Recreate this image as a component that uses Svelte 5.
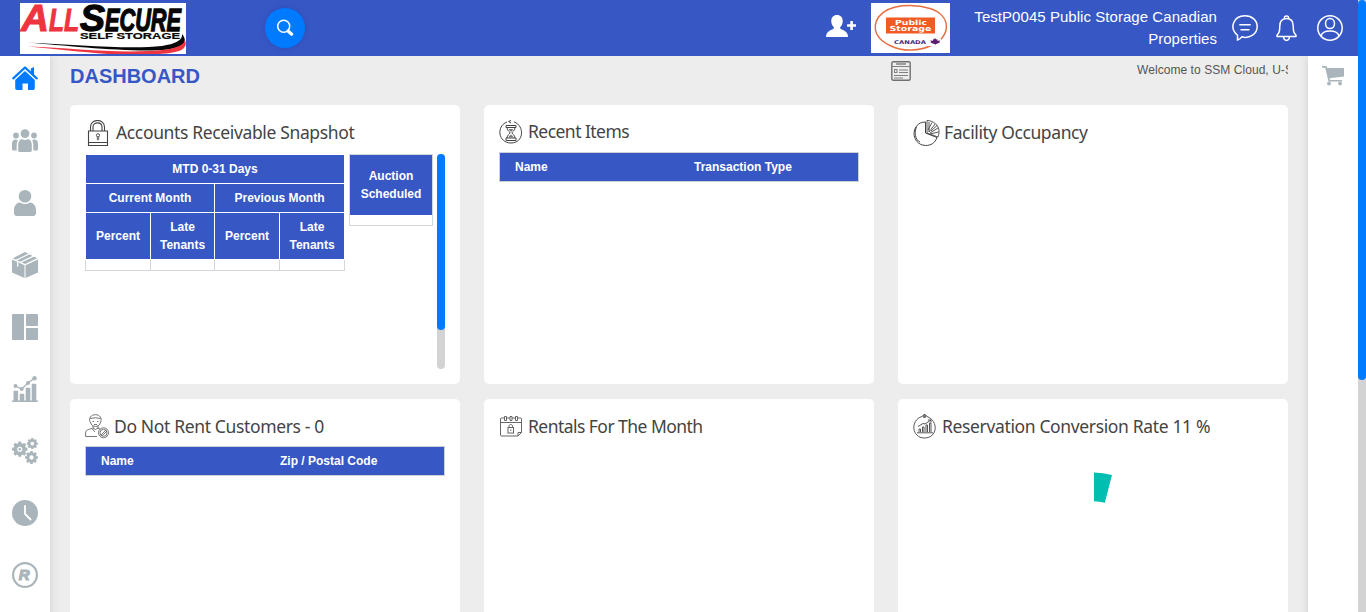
<script>
  const nav = ['home', 'group', 'user', 'box', 'layout', 'chart', 'gears', 'clock', 'registered'];
  const cards = [
    { icon: 'lock', title: 'Accounts Receivable Snapshot', kind: 'snapshot' },
    { icon: 'hourglass', title: 'Recent Items', kind: 'table', cols: ['Name', 'Transaction Type'] },
    { icon: 'pie', title: 'Facility Occupancy', kind: 'empty' },
    { icon: 'blocked', title: 'Do Not Rent Customers - 0', kind: 'table', cols: ['Name', 'Zip / Postal Code'] },
    { icon: 'calendar', title: 'Rentals For The Month', kind: 'empty' },
    { icon: 'growth', title: 'Reservation Conversion Rate 11 %', kind: 'gauge' }
  ];
  const gear = (cx, cy, r) => {
    const pts = [];
    for (let i = 0; i < 8; i++) {
      for (const [d, k] of [[-0.26, 0.8], [-0.19, 1], [0.19, 1], [0.26, 0.8]]) {
        const a = (i * Math.PI) / 4 + d;
        pts.push(`${(cx + Math.cos(a) * r * k).toFixed(2)} ${(cy + Math.sin(a) * r * k).toFixed(2)}`);
      }
    }
    const h = r * 0.33;
    return `M${pts.join('L')}Z M${cx - h} ${cy}a${h} ${h} 0 1 0 ${2 * h} 0a${h} ${h} 0 1 0 ${-2 * h} 0Z`;
  };
</script>

<div class="app">
  <header>
    <svg class="brand" width="166" height="51" viewBox="0 0 166 51">
      <rect width="166" height="51" fill="#fff" />
      <g font-family="Liberation Sans" font-weight="bold" font-style="italic">
        <g fill="#ee343f" stroke="#ee343f" stroke-width="1">
          <text x="1" y="27.500" font-size="37" textLength="28" lengthAdjust="spacingAndGlyphs">A</text>
          <text x="29" y="27.500" font-size="31" textLength="30" lengthAdjust="spacingAndGlyphs">LL</text>
        </g>
        <g fill="#050505" stroke="#050505" stroke-width="1.300">
          <text x="60" y="27.500" font-size="37" textLength="25" lengthAdjust="spacingAndGlyphs">S</text>
          <text x="85" y="27.500" font-size="31" textLength="76" lengthAdjust="spacingAndGlyphs">ECURE</text>
        </g>
      </g>
      <text x="60" y="35.500" font-family="Liberation Sans" font-weight="bold" font-size="9" fill="#080808" stroke="#080808" stroke-width=".2" textLength="100" lengthAdjust="spacingAndGlyphs">SELF STORAGE</text>
      <path d="M7 39.500C55 42 112 46.500 142 43C156 41 163 37 162 31C168 38 165 44 148 46.500C115 50 50 43 7 39.500Z" fill="#080808" />
      <path d="M8 43.500C50 45 90 50 129 48C151 47 163 44 165 37C168 45 162 50 139 51H88C60 49 37 46 8 43.500Z" fill="#ee343f" />
    </svg>
    <button class="search" aria-label="Search">
      <svg width="18" height="18" viewBox="0 0 18 18" fill="none" stroke="#fff"><circle cx="7.700" cy="7.300" r="6" stroke-width="1.500" /><path d="M12 12l3.700 3.200" stroke-width="3.200" stroke-linecap="round" /></svg>
    </button>
    <div class="tools">
      <svg class="adduser" width="31" height="23" viewBox="0 0 31 23" fill="#fff"><path d="M11 0C7.500 0 5 2.500 5.300 6.500C5.500 9.400 6.500 11 8 12.500C8 15.500 0 14.500 0 22H22C22 14.500 14 15.500 14 12.500C15.500 11 16.500 9.400 16.700 6.500C17 2.500 14.500 0 11 0ZM24.300 6h2.600v3.200H30v2.600h-3.100V15h-2.600v-3.200h-3.200V9.200h3.200Z" /></svg>
      <svg class="partner" width="79" height="50" viewBox="0 0 79 50">
        <rect width="79" height="50" fill="#fff" />
        <path d="M60 42.500C81 33 80 13 60 5.800C42 0 18 1 7.500 14C0 26 6 37 20 43C32 49 49 48 60 42.500" fill="none" stroke="#e56f43" stroke-width="1.500" />
        <path d="M15 14.500H64V30.500H15Z" fill="#f15a22" />
        <g font-family="DejaVu Sans" font-weight="bold" font-size="7" fill="#fff">
          <text x="24" y="21.500" textLength="32" lengthAdjust="spacingAndGlyphs">Public</text>
          <text x="18.500" y="28" textLength="42" lengthAdjust="spacingAndGlyphs">Storage</text>
        </g>
        <rect x="22" y="35.500" width="48" height="7.500" fill="#fff" />
        <text x="23" y="41" font-family="DejaVu Sans" font-weight="bold" font-size="5" fill="#4a287e" textLength="32" lengthAdjust="spacingAndGlyphs">CANADA</text>
        <path d="M64 35l1.200 1.500 1.300-.3-.2 1.600 3-.4-1 1.300.8.600-3 1.500-1.500.2-.3 1.400-.6-1.400-1.400-.2-3-1.500.8-.6-1-1.300 3 .4-.2-1.600 1.200.3Z" fill="#5b1c70" />
      </svg>
      <div class="account">TestP0045 Public Storage Canadian Properties</div>
      <svg class="chat" width="26" height="26" viewBox="0 0 26 26" fill="none" stroke="#fff" stroke-width="1.500"><path d="M5.500 20.300C-3.200 13 1.500.8 13 .8C20 .8 25.200 5.500 25.200 11.500C25.200 19.500 17 24 9.800 21.800C8.500 23.700 7.500 24.300 5.500 25Z" /><path d="M7.300 9.800h11.400M8.500 14.800h9" /></svg>
      <svg class="bell" width="21" height="27" viewBox="0 0 21 27" fill="none" stroke="#fff" stroke-width="1.500" stroke-linejoin="round"><path d="M8.500 3.500C7.500 0 13.500 0 12.500 3.500M10.500 3.500C5.500 3.500 3.800 7 3.800 11C3.800 17 3 18 1 20.200V21.500H20V20.200C18 18 17.200 17 17.200 11C17.200 7 15.500 3.500 10.500 3.500ZM7.500 22C8 26.500 13 26.500 13.500 22" /></svg>
      <svg width="26" height="26" viewBox="0 0 26 26" fill="none" stroke="#fff" stroke-width="1.500"><circle cx="13" cy="13" r="12.200" /><ellipse cx="13" cy="8.600" rx="4.500" ry="5" /><path d="M4 21C5 17 8.500 16 13 16S21 17 22 21" /></svg>
    </div>
  </header>

  <div class="body">
    <nav>
      {#each nav as name}
        <svg class:active={name === 'home'} width="26" height="26" viewBox="0 0 26 26" fill="currentColor">
          {#if name === 'home'}
            <path d="M13 4.900L22.800 13.800V22.300Q22.800 24 21.300 24H16V17.500H10.500V24H5Q3.200 24 3.200 22.300V13.800Z" />
            <path d="M1.300 12.300L13 1.300L24.700 12.300" fill="none" stroke="#fff" stroke-width="4.400" />
            <path d="M1.300 12.300L13 1.500L24.700 12.300" fill="none" stroke="currentColor" stroke-width="2.300" stroke-linecap="round" stroke-linejoin="round" /><path d="M18.800 2.500L22 1V10L18.800 7Z" />
          {:else if name === 'group'}
            <circle cx="13" cy="5.700" r="4.400" /><circle cx="4" cy="7.500" r="2.900" /><circle cx="22" cy="7.500" r="2.900" />
            <path d="M6.200 22.500V17C6.200 13 8.500 11.300 10 11.300Q13 12.800 16 11.300C17.500 11.300 19.800 13 19.800 17V22.500Q19.800 24 18 24H8Q6.200 24 6.200 22.500ZM0 21V16C0 13 1.500 11.500 3 11.500L6 12C5 14 4.700 15 4.700 17V22.500H1.500Q0 22.500 0 21ZM26 21V16C26 13 24.500 11.500 23 11.500L20 12C21 14 21.300 15 21.300 17V22.500H24.500Q26 22.500 26 21Z" />
          {:else if name === 'user'}
            <circle cx="13" cy="6.300" r="6.300" /><path d="M2 23V20C2 15 5.500 12.500 8 12.500Q13 15.500 18 12.500C20.500 12.500 24 15 24 20V23Q24 26 21 26H5Q2 26 2 23Z" />
          {:else if name === 'box'}
            <path d="M0 7.600L12.500 13.200V26L0 20.500ZM26 7.600V20.500L13.500 26V13.200ZM.8 6.300L13 0L25.200 6.300L13 12Z" />
            <path d="M4 8.300L17.500 1.800M8.500 10.300L22 3.900M5.700 9.200V14.700" fill="none" stroke="#fff" stroke-width="1.200" />
          {:else if name === 'layout'}
            <path d="M1 0H12V26H1Q0 26 0 25V1Q0 0 1 0ZM14 0H25Q26 0 26 1V12H14ZM14 14H26V25Q26 26 25 26H14Z" />
          {:else if name === 'chart'}
            <path d="M0 24.600H26V26H0ZM1.500 15.500q0-.7.7-.7h3.200q.7 0 .7.700V25H1.500ZM7.700 18.500q0-.7.7-.7h3.200q.7 0 .7.700V25H7.700ZM13.700 12.500q0-.7.7-.7h3.200q.7 0 .7.700V25h-4.600ZM19.700 8.500q0-.7.7-.7h3.200q.7 0 .7.700V25h-4.600Z" /><path d="M3.500 10L9.700 13L16 7L22.500 2.300" fill="none" stroke="currentColor" stroke-width="1.300" /><circle cx="3.500" cy="10" r="2" /><circle cx="9.700" cy="13" r="2" /><circle cx="16" cy="7" r="2" /><circle cx="22.500" cy="2.300" r="2.200" />
          {:else if name === 'gears'}
            <path fill-rule="evenodd" d={gear(7.8, 11.2, 7.8)} /><path fill-rule="evenodd" d={gear(20.3, 5.6, 5.6)} /><path fill-rule="evenodd" d={gear(19.5, 19.5, 6.5)} />
            <circle cx="7.800" cy="11.200" r="1.300" />
          {:else if name === 'clock'}
            <circle cx="13" cy="13" r="13" /><path d="M13 6V14L18.500 19.500" fill="none" stroke="#fff" stroke-width="1.800" stroke-linecap="round" />
          {:else}
            <circle cx="13" cy="13" r="11.900" fill="none" stroke="currentColor" stroke-width="2.200" />
            <text x="6.700" y="18.400" font-family="Liberation Sans" font-weight="bold" font-style="italic" font-size="15" stroke="currentColor" stroke-width="1.200">R</text>
          {/if}
        </svg>
      {/each}
    </nav>

    <main>
      <div class="top">
        <h1>DASHBOARD</h1>
        <svg class="news" width="20" height="20" viewBox="0 0 20 20" fill="none" stroke="#808080"><rect x=".8" y=".8" width="18.400" height="18.400" rx="1.500" stroke="#707070" stroke-width="1.400" /><path d="M1 5.500H19M8 9H17M8 11.500H17M3 14.500H17M3 17H12" stroke-width="1" /><path d="M5 3H15" stroke-width="1.500" /><rect x="3.500" y="8.500" width="2.500" height="3" /></svg>
        <div class="ticker">Welcome to SSM Cloud, U-Store</div>
      </div>
      <div class="cards">
        {#each cards as card}
          <section class="card {card.icon}">
            <h2>
              {#if card.icon === 'lock'}
                <svg width="26" height="26" viewBox="0 0 26 26" fill="none" stroke="#444" stroke-width="1.100"><path d="M5.500 11V7C5.500-1.700 19.500-1.700 19.500 7V11M8 11V7C8 1.500 17 1.500 17 7V11M3.500 11H22.500V25.500H3.500ZM3.500 22.500H22.500" /><circle cx="13" cy="15.300" r="1.600" stroke-width=".9" /><path d="M12.300 16.800V19.700H13.700V16.800" stroke-width=".8" /></svg>
              {:else if card.icon === 'hourglass'}
                <svg width="24" height="24" viewBox="0 0 24 24" fill="none" stroke="#444"><path d="M8 2C-3 6-1 23 12 23S26 6 15 1.800M12 .5L9.500 1.500L12 3" stroke-width="1" /><path d="M7 5.500H17V7.500H7ZM7 18H17V20.500H7ZM8 7.500C8 11 11 11.500 11 12.800S8 15 8 18M16 7.500C16 11 13 11.500 13 12.800S16 15 16 18" stroke-width="1" /><path d="M9.500 9H14.500L12 12ZM12 14.500L15 17.500H9Z" fill="#777" stroke="none" /></svg>
              {:else if card.icon === 'pie'}
                <svg width="27" height="26" viewBox="0 0 27 26" fill="none" stroke="#444"><path d="M12.500 2C-2.500 2-3 24.500 12.500 25.500C18 25.500 22 23 24 17.500L12.500 13ZM3.500 7C1 12 2 20 7 22" /><path d="M14 .5C20 .5 26 5 26 11C26 14 25.500 15.500 25 17L14 13ZM16 2V12L22 4M17 13L25 8M17 14L25.500 12M18 11L24 5.500M15 10L19 2.500" stroke-width=".9" /></svg>
              {:else if card.icon === 'blocked'}
                <svg width="24" height="25" viewBox="0 0 24 25" fill="none" stroke="#666" stroke-width=".9"><path d="M5 8C3.500 4 6 .7 10.500.7S17 4 15.700 8M5.200 4.500Q10.500 3 15.500 4.500M5.500 8C6 14 15 14 15.500 8M8 11.500V15M13 11.500V15M8 14Q10.500 17 13 14M12 22.500H.6V19C.6 16 3 15.500 7 14.500L10 18M13 14L15 15M7.500 7.500H9M12 7.500H13.500M9 10.500H12" /><circle cx="18.500" cy="18.800" r="5" /><circle cx="18.500" cy="18.800" r="3.500" /><path d="M16 21L21 16M17 22L22 17" /></svg>
              {:else if card.icon === 'calendar'}
                <svg width="24" height="24" viewBox="0 0 24 24" fill="none" stroke="#666"><path d="M1.500 5Q1.500 4 2.500 4H21.500Q22.500 4 22.500 5V18.500L19 22H2.500Q1.500 22 1.500 21ZM1.500 8.500H22.500M19 22V18.500H22.500" /><path d="M5.500 2.500h2v4h-2ZM11 2.500h2v4h-2ZM16.500 2.500h2v4h-2Z" fill="#fff" /><rect x="9" y="13.500" width="5.500" height="5.500" /><path d="M10 13.500V12C10 10 13.500 10 13.500 12V13.500M11.800 15.500v1.500" /></svg>
              {:else}
                <svg width="24" height="25" viewBox="0 0 24 25" fill="none" stroke="#555"><path d="M9 2.500C-3 6-1.500 24 11.500 24S26 7 14 2.500" /><path d="M11.500 0L13.500 2L11.500 4L9.500 2Z" fill="#777" /><path d="M5 12.500L10 9.500L12 10L18 6M15 6H18V8.500M4 18.800H20M6 18v-3h1.500v3M9.500 18v-5H11v5M13 18v-7h1.500v7M16.500 18V9H18v9" /></svg>
              {/if}
              <span>{card.title}</span>
            </h2>
            {#if card.kind === 'snapshot'}
              <div class="snapshot">
                <div class="aging">
                  <b class="all">MTD 0-31 Days</b>
                  <b class="half">Current Month</b><b class="half">Previous Month</b>
                  <b>Percent</b><b>Late Tenants</b><b>Percent</b><b>Late Tenants</b>
                  <i></i><i></i><i></i><i></i>
                </div>
                <div class="auction"><b>Auction Scheduled</b></div>
                <div class="bar"><div></div></div>
              </div>
            {:else if card.kind === 'table'}
              <div class="thead">{#each card.cols as c}<b>{c}</b>{/each}</div>
            {:else if card.kind === 'gauge'}
              <svg class="gauge" width="18" height="31" viewBox="0 0 18 31"><path d="M0 .5Q9 .8 18 3L10.800 30.700Q6 29.300 0 29.200Z" fill="#00bfb0" /></svg>
            {/if}
          </section>
        {/each}
      </div>
    </main>

    <aside>
      <svg width="22" height="20" viewBox="0 0 22 20" fill="#a9b5ba"><path d="M0 0H4.500L5.200 2H22V10.500L7.500 12.200L8 14H20V15.500H6.500L3.200 1.800H0Z" /><circle cx="7" cy="17.500" r="1.900" /><circle cx="18" cy="17.500" r="1.900" /></svg>
    </aside>
  </div>
  <div class="pagebar"><div></div></div>
</div>

<style>
  :global(body) { margin: 0; overflow: hidden; }
  .app { display: grid; grid-template: 56px 556px / 1358px 8px; width: 1366px; height: 612px; overflow: hidden; background: #ededed; font-family: "Liberation Sans", Arial, sans-serif; }
  svg { display: block; flex: none; }
  header { display: flex; align-items: flex-start; background: #3757c5; }
  .brand { margin: 3px 0 0 20px; }
  .search { display: grid; place-items: center; width: 40px; height: 40px; margin: 8px 0 0 79px; padding: 0; border: 0; border-radius: 50%; background: #007bff; box-shadow: 0 0 4px #2d4baf; }
  .tools { display: flex; align-items: flex-start; margin-left: auto; padding-right: 15px; }
  .adduser { margin: 15px 14px 0 0; }
  .partner { margin-top: 3px; }
  .account { width: 250px; margin: 6px 15px 0 17px; color: #fff; font-size: 15px; line-height: 22px; letter-spacing: .05px; text-align: right; }
  .tools .chat { margin: 15px 18px 0 0; }
  .tools .bell { margin: 15px 20px 0 0; }
  .tools svg:last-child { margin-top: 15px; }
  .body { grid-row: 2; display: grid; grid-template-columns: 50px 1258px 50px; overflow: hidden; }
  nav { display: flex; flex-direction: column; align-items: center; gap: 36px; padding-top: 10px; background: #fff; color: #a9b5ba; box-shadow: 0 0 9px #ccc; }
  nav .active { color: #007bff; }
  main { padding: 0 20px; min-width: 0; }
  .top { display: flex; align-items: flex-start; height: 49px; }
  h1 { width: 821px; margin: 8px 0 0; color: #3757c5; font-size: 20px; line-height: 24px; }
  .news { margin-top: 5px; }
  .ticker { width: 151px; margin: 6px 0 0 auto; overflow: hidden; white-space: nowrap; color: #555; font-size: 12px; line-height: 16px; letter-spacing: .06px; }
  .cards { display: grid; grid-template-columns: repeat(3, 390px); grid-auto-rows: 279px; gap: 15px 24px; }
  .card { box-sizing: border-box; padding: 15px; border-radius: 5px; background: #fff; }
  h2 { display: flex; align-items: flex-start; height: 32px; margin: 0; color: #444; font: 400 17.500px/24px "Noto Sans", sans-serif; white-space: nowrap; }
  h2 span { margin-left: 5px; letter-spacing: -.36px; }
  .lock h2 { height: 34px; }
  .lock h2, .pie h2 { line-height: 25px; }
  .hourglass h2 { line-height: 23px; }
  .hourglass h2 span, .calendar h2 span { letter-spacing: -.54px; }
  .pie h2 span { margin-left: 4px; letter-spacing: -.39px; }
  .snapshot { display: flex; align-items: flex-start; }
  b { display: grid; place-items: center; background: #3757c5; color: #fff; font-size: 12px; line-height: 18px; text-align: center; }
  .aging { display: grid; box-sizing: border-box; width: 260px; height: 117px; grid-template: 28px 28px 46px 10px / 64px 63px 64px 64px; gap: 1px; padding: 1px; background: linear-gradient(#fff 106px, #d3d6da 106px); }
  .all { grid-column: span 4; }
  .half { grid-column: span 2; }
  i { background: #fff; }
  .auction { box-sizing: border-box; width: 84px; height: 72px; margin-left: 4px; border: 1px solid #d3d6da; }
  .auction b { height: 60px; }
  .bar { width: 8px; height: 215px; margin-left: 4px; border-radius: 4px; background: #d3d3d3; }
  .bar div { height: 176px; border-radius: 4px; background: #007bff; }
  .thead { display: flex; box-sizing: border-box; height: 30px; border: 1px solid #cdd0d7; background: #3757c5; }
  .thead b { place-items: center start; padding-left: 15px; }
  .thead b:first-child { box-sizing: border-box; width: 179px; }
  .gauge { margin: 26px 0 0 181px; }
  aside { display: flex; justify-content: center; background: #fff; padding-top: 10px; box-shadow: 0 0 8px #ccc; }
  .pagebar { grid-column: 2; grid-row: 1 / 3; background: #d3d3d3; }
  .pagebar div { height: 380px; border-radius: 4px; background: #007bff; }
</style>
